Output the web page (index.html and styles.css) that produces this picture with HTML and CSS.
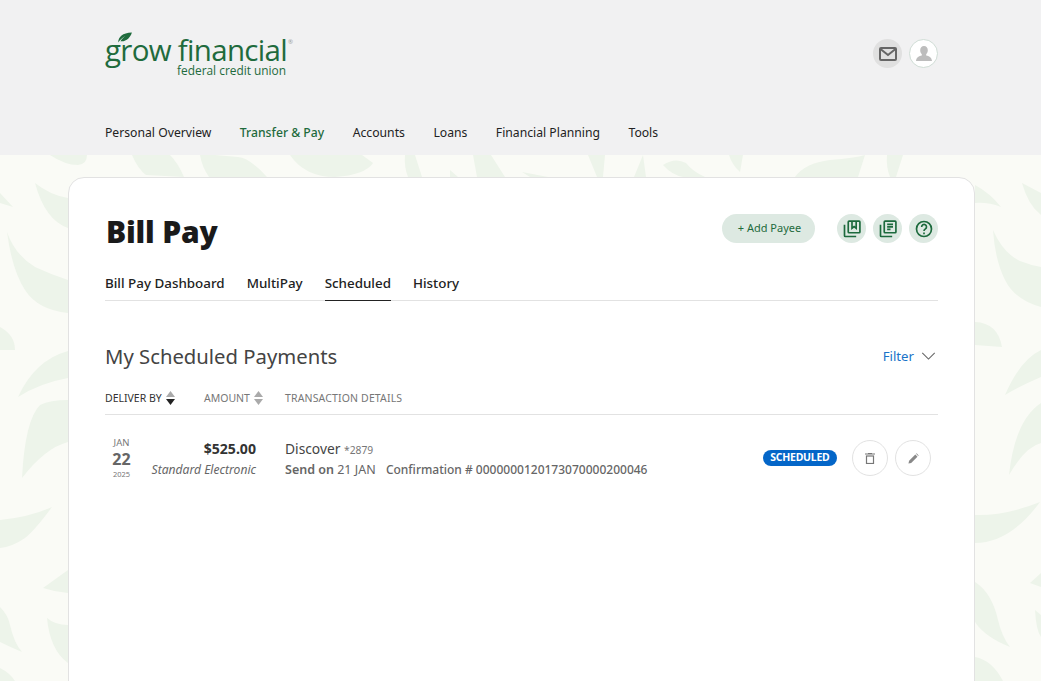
FILE: index.html
```html
<!DOCTYPE html>
<html lang="en">
<head>
<meta charset="utf-8">
<title>Bill Pay</title>
<link rel="stylesheet" href="styles.css">
</head>
<body>
<header class="site-header">
  <div class="brand-row">
    <a class="logo">
      <svg class="logo-leaf" viewBox="0 0 16 12" width="16" height="11"><path d="M0.500 11.500C1 5 5 1 15.500 0.500C14 6 9 11 3 10C5 7 7 5 10 3.500C6.500 5 3 8 0.500 11.500Z" fill="#1f6b3d"/></svg>
      <span class="logo-main">grow financial<sup class="logo-reg">®</sup></span>
      <span class="logo-sub">federal credit union</span>
    </a>
    <div class="user-actions">
      <span class="circle circle-mail">
        <svg viewBox="0 0 18 14" width="18" height="14" fill="none" stroke="#666" stroke-width="2"><rect x="1" y="1" width="16" height="12" rx="1"/><path d="M1.500 2l7.500 6 7.500-6"/></svg>
      </span>
      <span class="circle circle-user">
        <svg viewBox="0 0 18 18" width="18" height="18" fill="#bdbdbd"><path d="M9 1c2.400 0 3.800 1.800 3.800 4.200 0 1.700-.7 3-1.600 3.900v1.500c2.700.6 5.400 1.700 5.800 5.400H1c.4-3.700 3.100-4.800 5.800-5.400V9.100C5.900 8.200 5.200 6.900 5.200 5.200 5.200 2.800 6.600 1 9 1z"/></svg>
      </span>
    </div>
  </div>
  <nav class="main-nav">
    <a>Personal Overview</a>
    <a class="active">Transfer &amp; Pay</a>
    <a>Accounts</a>
    <a>Loans</a>
    <a>Financial Planning</a>
    <a>Tools</a>
  </nav>
</header>

<main class="stage">
  <svg class="leaves" viewBox="0 0 1041 526" width="1041" height="526" aria-hidden="true">
    <g fill="#edf4ea">
      <path d="M50 0Q65 10 78 10Q87 9 87 0Z"/>
      <path d="M132 0Q138 14 146 20L184 22Q178 8 170 0Z"/>
      <path d="M200 0Q202 12 209 22H267Q250 3 238 2L215 0Z"/>
      <path d="M290 0Q305 22 335 22Q365 20 373 8L362 0Z"/>
      <path d="M405 0Q404 12 408 22H422L415 0Z"/>
      <path d="M450 15L458 22H450Z"/>
      <path d="M473 0L477 22H505L491 0Z"/>
      <path d="M522 17L548 22H530Z"/>
      <path d="M588 0L597 22H603L605 0Z"/>
      <path d="M634 22L643 0L646 22Z"/>
      <path d="M663 10Q675 2 686 8Q692 16 705 22H683Q672 20 663 10Z"/>
      <path d="M729 0Q732 10 740 17L743 0Z"/>
      <path d="M795 22Q805 8 830 5Q855 3 865 0L858 22Z"/>
      <path d="M887 0Q886 12 890 22H896L903 0Z"/>

      <path d="M35 28Q50 40 68 43V73Q45 65 35 28Z"/>
      <path d="M0 38L13 52L0 48Z"/>
      <path d="M7 77Q15 100 35 112Q50 119 68 125V158Q38 155 25 135Q12 115 7 77Z"/>
      <path d="M0 172Q15 180 15 195H0Z"/>
      <path d="M18 242Q35 205 68 196V223Q40 228 18 242Z"/>
      <path d="M22 323Q25 265 40 250Q50 245 68 245V287Q45 293 22 323Z"/>
      <path d="M0 365Q30 362 52 352Q35 375 25 383Q12 392 0 393Z"/>
      <path d="M43 433L68 415V438Q55 437 43 433Z"/>
      <path d="M47 463Q55 470 68 470V508Q50 495 47 463Z"/>
      <path d="M0 452Q8 460 10 470Q14 488 22 497Q10 492 0 487Z"/>
      <path d="M0 513Q10 518 15 526H0Z"/>

      <path d="M975 30Q990 38 1001 52Q988 47 975 48Z"/>
      <path d="M1022 28L1041 38V60Q1028 50 1022 28Z"/>
      <path d="M993 75Q1003 98 1020 106Q1030 110 1041 112V152Q1015 145 1005 125Q995 105 993 75Z"/>
      <path d="M975 167Q998 168 1002 192L975 190Z"/>
      <path d="M1005 240Q1020 205 1041 195V222Q1022 230 1005 240Z"/>
      <path d="M1009 320Q1015 265 1041 248V288Q1025 292 1009 320Z"/>
      <path d="M975 360Q1005 361 1040 347Q1010 388 975 388Z"/>
      <path d="M1030 428L1041 418V432Z"/>
      <path d="M975 427Q992 438 998 465Q1002 482 1010 492Q985 482 975 467Z"/>
      <path d="M1035 455L1041 460V482Q1036 475 1035 455Z"/>
      <path d="M975 502Q992 505 1003 526H975Z"/>
    </g>
  </svg>
  <section class="card">
    <div class="page-head">
      <h1>Bill Pay</h1>
      <div class="page-actions">
        <button class="btn-add">+ Add Payee</button>
        <div class="icon-group">
          <span class="circle circle-green">
            <svg viewBox="0 0 24 24" width="20" height="20" fill="none" stroke="#1c6a3d" stroke-width="2"><rect x="7.500" y="2.500" width="14" height="14" rx="1"/><path d="M3 7v13a1 1 0 0 0 1 1h13"/><path d="M12 3v8l2.500-2 2.500 2V3"/></svg>
          </span>
          <span class="circle circle-green">
            <svg viewBox="0 0 24 24" width="20" height="20" fill="none" stroke="#1c6a3d" stroke-width="2"><rect x="7.500" y="2.500" width="14" height="14" rx="1"/><path d="M3 7v13a1 1 0 0 0 1 1h13M11 6.500h7M11 9.500h7M11 12.500h4"/></svg>
          </span>
          <span class="circle circle-green">
            <svg viewBox="0 0 24 24" width="20" height="20" fill="none" stroke="#1c6a3d" stroke-width="2"><circle cx="12" cy="12" r="9"/><path d="M9.200 9.500a2.900 2.900 0 1 1 4.500 2.400c-1 .7-1.700 1.200-1.700 2.400"/><path d="M12 16.200v2"/></svg>
          </span>
        </div>
      </div>
    </div>
    <nav class="tabs">
      <a>Bill Pay Dashboard</a>
      <a>MultiPay</a>
      <a class="active">Scheduled</a>
      <a>History</a>
    </nav>
    <div class="section-head">
      <h2>My Scheduled Payments</h2>
      <a class="filter">Filter
        <svg viewBox="0 0 16 9" width="15" height="8" fill="none" stroke="#666" stroke-width="1.200"><path d="M1 1l7 7 7-7"/></svg>
      </a>
    </div>
    <div class="table-head">
      <div class="th th-active">DELIVER BY
        <svg class="sort" viewBox="0 0 9 14" width="9" height="14"><path d="M4.500 0L9 6H0Z" fill="#aaa"/><path d="M4.500 14L0 8H9Z" fill="#222"/></svg>
      </div>
      <div class="th">AMOUNT
        <svg class="sort" viewBox="0 0 9 14" width="9" height="14"><path d="M4.500 0L9 6H0Z" fill="#aaa"/><path d="M4.500 14L0 8H9Z" fill="#aaa"/></svg>
      </div>
      <div class="th th-wide">TRANSACTION DETAILS</div>
    </div>
    <div class="table-row">
      <div class="date">
        <span class="date-mon">JAN</span>
        <span class="date-day">22</span>
        <span class="date-year">2025</span>
      </div>
      <div class="amount">
        <strong>$525.00</strong>
        <em>Standard Electronic</em>
      </div>
      <div class="details">
        <div class="payee">Discover <span class="acct">*2879</span></div>
        <div class="meta"><b>Send on</b> 21 JAN <span class="confirm">Confirmation # 0000000120173070000200046</span></div>
      </div>
      <div class="row-actions">
        <span class="badge">SCHEDULED</span>
        <span class="circle circle-outline">
          <svg viewBox="0 0 10 11" width="10" height="11" fill="none" stroke="#777" stroke-width="1.200"><path d="M0 1h10M3 .5h4"/><rect x="1.500" y="3" width="7" height="7.500"/></svg>
        </span>
        <span class="circle circle-outline">
          <svg viewBox="0 0 12 12" width="11" height="11" fill="#888"><path d="M.5 11.500l.7-3L8 1.700l2.300 2.300L3.500 10.800z"/><path d="M8.800.9l.6-.5 2.200 2.200-.5.600z"/></svg>
        </span>
      </div>
    </div>
  </section>
</main>
</body>
</html>
```
FILE: styles.css
```css
* { box-sizing: border-box; }
html, body { margin: 0; padding: 0; height: 681px; overflow: hidden; }
body { font-family: "Noto Sans", "Open Sans", sans-serif; color: #222; background: #fafbf6; }
h1, h2 { margin: 0; }
button { font: inherit; border: 0; }

.site-header { height: 155px; background: #f1f1f2; padding: 0 103px 0 105px; }
.brand-row { height: 115px; display: flex; justify-content: space-between; align-items: flex-start; }
.logo { position: relative; display: flex; flex-direction: column; padding-top: 36px; color: #1f6b3d; font-family: "Open Sans", sans-serif; }
.logo-leaf { position: absolute; left: 12px; top: 32px; }
.logo-main { font-size: 29.500px; line-height: 28px; letter-spacing: -.7px; white-space: nowrap; }
.logo-reg { font-size: 6px; color: #999; vertical-align: top; line-height: 12px; margin-left: 1px; }
.logo-sub { font-size: 11.900px; line-height: 12px; margin-left: 72px; white-space: nowrap; }
.user-actions { display: flex; gap: 7px; padding-top: 39px; }
.circle { width: 29px; height: 29px; border-radius: 50%; display: flex; align-items: center; justify-content: center; flex: none; }
.circle-mail { background: #e0e0e0; }
.circle-user { background: #fff; border: 1px solid #cfdcd5; }

.main-nav { display: flex; gap: 28.500px; font-size: 12.200px; line-height: 18px; padding-top: 9px; color: #222; }
.main-nav a.active { color: #1f6b3d; font-weight: 500; }

.stage { position: relative; height: 526px; padding: 22px 66px 0 68px; overflow: hidden; }
.leaves { position: absolute; left: 0; top: 0; }
.card { position: relative; height: 600px; background: #fff; border: 1px solid #e2e2e2; border-radius: 16px; padding: 36px 36px 0 36px; }

.page-head { display: flex; justify-content: space-between; align-items: center; height: 29px; }
h1 { font-size: 30px; font-weight: 900; line-height: 38px; color: #1a1a1a; letter-spacing: -.2px; padding: 6px 0 0 1px; }
.page-actions { display: flex; align-items: center; gap: 22px; }
.btn-add { height: 29px; width: 93px; border-radius: 15px; background: #dde9e2; color: #1f6b3d; font-size: 11px; padding: 0 0 2px 2px; }
.icon-group { display: flex; gap: 7px; }
.circle-green { background: #dde9e2; }

.tabs { display: flex; gap: 22px; margin-top: 18px; height: 40px; border-bottom: 1px solid #e2e2e2; font-size: 13.400px; font-weight: 500; color: #222; }
.tabs a { height: 40px; line-height: 45px; }
.tabs a.active { border-bottom: 1px solid #222; }

.section-head { display: flex; justify-content: space-between; align-items: center; margin-top: 39px; height: 32px; }
h2 { font-size: 20.300px; font-weight: 400; color: #444; }
.filter { display: flex; align-items: center; gap: 7px; color: #1a73c8; font-size: 13.200px; padding-right: 2px; }

.table-head { display: grid; grid-template-columns: 99px 81px 1fr; margin-top: 9px; height: 34px; align-items: center; border-bottom: 1px solid #e2e2e2; }
.th { display: flex; align-items: center; gap: 4px; font-size: 10.500px; color: #777; white-space: nowrap; }
.th-active { color: #333; }
.th-wide { letter-spacing: .15px; }
.sort { flex: none; }
.table-row { display: grid; grid-template-columns: 33px 118px 1fr auto; padding-top: 24px; align-items: start; }
.date { display: flex; flex-direction: column; align-items: center; color: #777; margin-top: -3px; }
.date-mon { font-size: 9.500px; line-height: 13px; }
.date-day { font-size: 16px; line-height: 20px; font-weight: 700; color: #666; }
.date-year { font-size: 7.500px; line-height: 11px; }
.amount { display: flex; flex-direction: column; align-items: flex-end; line-height: 20px; }
.amount strong { font-size: 14.100px; color: #333; font-weight: 700; }
.amount em { font-size: 12.100px; color: #666; padding-top: 1px; }
.details { padding-left: 29px; line-height: 20px; }
.payee { font-size: 13.800px; color: #444; }
.acct { font-size: 10.300px; color: #777; }
.meta { font-size: 12.500px; color: #666; }
.meta b { font-weight: 600; }
.confirm { font-size: 12px; font-weight: 500; margin-left: 7px; }
.row-actions { display: flex; align-items: center; gap: 7px; padding-right: 7px; margin-top: 1px; }
.badge { background: #0466c8; color: #fff; font-size: 10.500px; font-weight: 700; letter-spacing: -.25px; border-radius: 8px; height: 16px; line-height: 15px; padding: 0 7.500px; margin-right: 8px; }
.circle-outline { width: 36px; height: 36px; border: 1px solid #e2e2e2; background: #fff; }
```
